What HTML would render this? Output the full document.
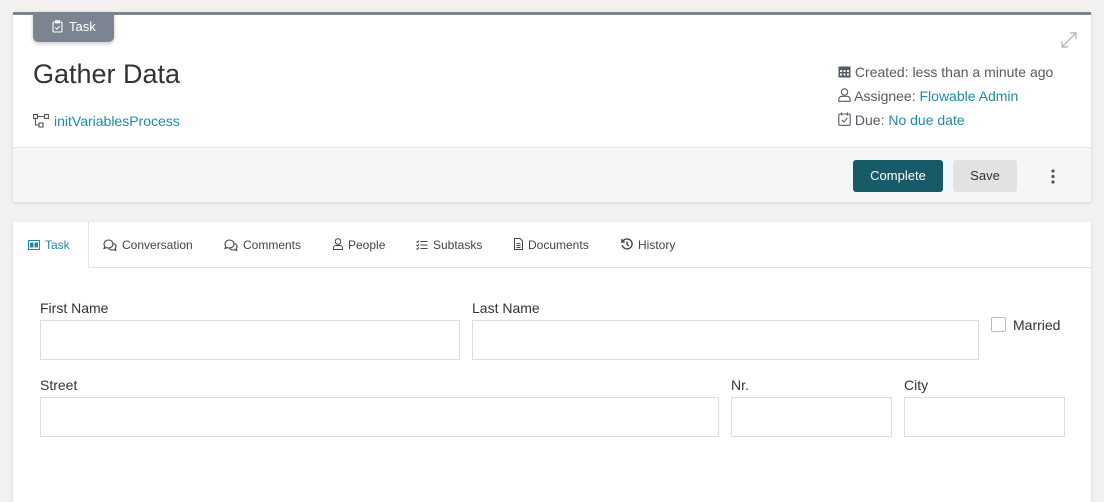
<!DOCTYPE html>
<html><head><style>
*{box-sizing:border-box;margin:0;padding:0}
body{width:1104px;height:488px;background:#f3f2f0;font-family:"Liberation Sans",sans-serif;position:relative;overflow:hidden;color:#333}
.a{position:absolute}
.card1{left:13px;top:12px;width:1078px;height:190px;background:#fff;border-top:3px solid #7b8490;box-shadow:0 1px 4px rgba(0,0,0,.12)}
.foot{left:0;top:132px;width:1078px;height:55px;background:#f5f6f8;border-top:1px solid #e4e6ea}
.badge{left:20px;top:-3px;width:81px;height:30px;background:#7b8490;border-radius:0 0 5px 5px;color:#fff;font-size:13px;line-height:30px;box-shadow:0 2px 4px rgba(0,0,0,.2)}
.link{color:#1f8ba5}
.meta{font-size:14px;color:#555b63}
.btn{height:32px;border-radius:3px;font-size:13px;line-height:32px;text-align:center}
.card2{left:13px;top:222px;width:1078px;height:280px;background:#fff;box-shadow:0 1px 4px rgba(0,0,0,.1)}
.tab{top:0;height:46px;line-height:46px;font-size:12px;color:#444}
.tab svg{margin-right:5px}
.lbl{font-size:14px;color:#333}
.inp{border:1px solid #ddd;height:40px;background:#fff}
</style></head><body>
<div class="a card1">
  <div class="a badge"><svg class="a" style="left:19px;top:8px" width="11" height="13" viewBox="0 0 11 13" fill="none" stroke="#fff" stroke-width="1.1"><rect x="1" y="2" width="9" height="10" rx="1"/><rect x="3.5" y="0.8" width="4" height="2"/><path d="M3.3 7.5l1.6 1.6 2.8-3"/></svg><span class="a" style="left:36px">Task</span></div>
  <svg class="a" style="left:1047px;top:16px" width="18" height="18" viewBox="0 0 18 18" fill="none" stroke="#b8bcc2" stroke-width="1.4"><path d="M2 16L16 2M10 2h6v6M2 10v6h6"/></svg>
  <div class="a" style="left:20px;top:44px;font-size:27px;color:#333">Gather Data</div>
  <svg class="a" style="left:20px;top:99px" width="16" height="14" viewBox="0 0 16 14" fill="none" stroke="#555" stroke-width="1.1"><rect x="0.5" y="0.5" width="4" height="4"/><rect x="11.5" y="0.5" width="4" height="4"/><rect x="6" y="9" width="4" height="4"/><path d="M4.5 2.5h7M2.5 4.5v6.5H6"/></svg>
  <div class="a link" style="left:41px;top:98px;font-size:14px">initVariablesProcess</div>
  <div class="a meta" style="left:825px;top:49px"><svg style="vertical-align:-1px" width="13" height="13" viewBox="0 0 13 13"><rect x="0.5" y="1.5" width="12" height="11" fill="#555b63"/><g fill="#fff"><rect x="2" y="5" width="2" height="2"/><rect x="5.5" y="5" width="2" height="2"/><rect x="9" y="5" width="2" height="2"/><rect x="2" y="8.5" width="2" height="2"/><rect x="5.5" y="8.5" width="2" height="2"/><rect x="9" y="8.5" width="2" height="2"/></g></svg> Created: less than a minute ago</div>
  <div class="a meta" style="left:825px;top:73px"><svg style="vertical-align:-1px" width="13" height="14" viewBox="0 0 13 14" fill="none" stroke="#555b63" stroke-width="1.1"><circle cx="6.5" cy="4" r="3.2"/><path d="M0.8 13.3v-2c0-1.5 1.3-3 3-3h5.4c1.7 0 3 1.5 3 3v2z"/></svg> Assignee: <span class="link">Flowable Admin</span></div>
  <div class="a meta" style="left:825px;top:97px"><svg style="vertical-align:-1px" width="13" height="14" viewBox="0 0 13 14" fill="none" stroke="#555b63" stroke-width="1.1"><rect x="0.8" y="2" width="11.4" height="11.3" rx="1"/><path d="M3.5 0.5v3M9.5 0.5v3M3.8 8l2 2 3.5-4"/></svg> Due: <span class="link">No due date</span></div>
  <div class="a foot">
    <div class="a btn" style="left:840px;top:12px;width:90px;background:#175b68;color:#fff">Complete</div>
    <div class="a btn" style="left:940px;top:12px;width:64px;background:#e2e2e2;color:#333">Save</div>
    <svg class="a" style="left:1038px;top:21px" width="4" height="15"><circle cx="2" cy="2" r="1.6" fill="#555"/><circle cx="2" cy="7.5" r="1.6" fill="#555"/><circle cx="2" cy="13" r="1.6" fill="#555"/></svg>
  </div>
</div>
<div class="a card2">
  <div class="a" style="left:76px;top:45px;width:1002px;height:1px;background:#e4e4e4"></div>
  <div class="a" style="left:75px;top:0;width:1px;height:46px;background:#e4e4e4"></div>
  <div class="a tab" style="left:15px;color:#1f8ba5"><svg style="vertical-align:-1px" width="12" height="10"><rect x="0.5" y="0.5" width="11" height="9" fill="none" stroke="#1f8ba5"/><rect x="2" y="2.5" width="3.5" height="5" fill="#1f8ba5"/><rect x="6.5" y="2.5" width="3.5" height="5" fill="#1f8ba5"/></svg>Task</div>
  <div class="a tab" style="left:90px"><svg style="vertical-align:-2px" width="14" height="12" fill="none" stroke="#444" stroke-width="1.1"><path d="M1 5c0-2.2 2-4 4.5-4S10 2.8 10 5 8 9 5.5 9c-.8 0-1.5-.1-2-.4L1 9.5l.8-2C1.3 6.8 1 6 1 5zM10.5 4.5c1.5.5 2.5 1.8 2.5 3.2 0 .8-.3 1.5-.8 2l.6 1.8-2-.8c-.5.2-1 .3-1.6.3-1.5 0-2.8-.6-3.5-1.6"/></svg>Conversation</div>
  <div class="a tab" style="left:211px"><svg style="vertical-align:-2px" width="14" height="12" fill="none" stroke="#444" stroke-width="1.1"><path d="M1 5c0-2.2 2-4 4.5-4S10 2.8 10 5 8 9 5.5 9c-.8 0-1.5-.1-2-.4L1 9.5l.8-2C1.3 6.8 1 6 1 5zM10.5 4.5c1.5.5 2.5 1.8 2.5 3.2 0 .8-.3 1.5-.8 2l.6 1.8-2-.8c-.5.2-1 .3-1.6.3-1.5 0-2.8-.6-3.5-1.6"/></svg>Comments</div>
  <div class="a tab" style="left:320px"><svg style="vertical-align:-1px" width="10" height="12" fill="none" stroke="#444"><circle cx="5" cy="3.5" r="2.8"/><path d="M0.5 11.5v-1.5c0-1.4 1-2.5 2.5-2.5h4c1.5 0 2.5 1.1 2.5 2.5v1.5z"/></svg>People</div>
  <div class="a tab" style="left:403px"><svg style="vertical-align:-1px" width="12" height="10" stroke="#444" fill="none"><path d="M4.5 1.5h7M4.5 5h7M4.5 8.5h7M0.5 1.5l1 1 1.5-2M0.5 5l1 1 1.5-2M0.5 8.5l1 1 1.5-2"/></svg>Subtasks</div>
  <div class="a tab" style="left:501px"><svg style="vertical-align:-1px" width="9" height="12" fill="none" stroke="#444"><path d="M0.5 0.5h5.5l2.5 2.5v8.5h-8z M2.5 5.5h4M2.5 7.5h4M2.5 9.5h4"/></svg>Documents</div>
  <div class="a tab" style="left:608px"><svg style="vertical-align:-1px" width="12" height="12" fill="none" stroke="#444" stroke-width="1.4"><path d="M2 3A5 5 0 1 1 1.2 7M0.8 1v3h3M6 3.5V6.5l2 1.3"/></svg>History</div>
  <div class="a lbl" style="left:27px;top:78px">First Name</div>
  <div class="a inp" style="left:27px;top:98px;width:420px"></div>
  <div class="a lbl" style="left:459px;top:78px">Last Name</div>
  <div class="a inp" style="left:459px;top:98px;width:507px"></div>
  <div class="a" style="left:978px;top:95px;width:15px;height:15px;border:1px solid #bbb;border-radius:2px"></div>
  <div class="a lbl" style="left:1000px;top:95px">Married</div>
  <div class="a lbl" style="left:27px;top:155px">Street</div>
  <div class="a inp" style="left:27px;top:175px;width:679px"></div>
  <div class="a lbl" style="left:718px;top:155px">Nr.</div>
  <div class="a inp" style="left:718px;top:175px;width:161px"></div>
  <div class="a lbl" style="left:891px;top:155px">City</div>
  <div class="a inp" style="left:891px;top:175px;width:161px"></div>
</div>
</body></html>
